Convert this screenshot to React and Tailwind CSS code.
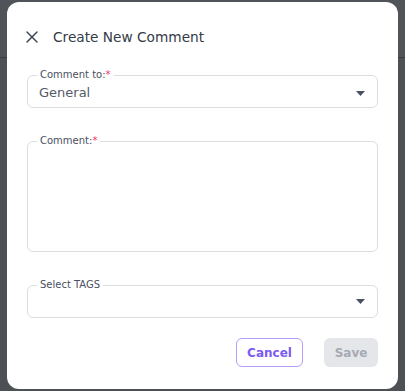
import { X } from "lucide-react";

function Caret() {
  return (
    <svg width="9" height="5" viewBox="0 0 9 5" className="shrink-0">
      <path d="M0 0h9L4.5 5z" fill="#4b5060" />
    </svg>
  );
}

function Field({ label, required, className, children }) {
  return (
    <fieldset
      className={
        "m-0 min-w-0 rounded-[6px] border border-[#dcdde0] p-0 " + (className || "")
      }
    >
      <legend className="ml-[9px] px-[3px] text-[10px] leading-[12px] font-medium text-[#4b5060]">
        {label}
        {required && <span className="text-[#f0336a]">*</span>}
      </legend>
      {children}
    </fieldset>
  );
}

export default function App() {
  return (
    <div
      className="relative h-[391px] w-[405px] overflow-hidden bg-[#4d5055] pt-[2px] pl-[7px]"
      style={{ fontFamily: "'DejaVu Sans', sans-serif" }}
    >
      <div className="absolute inset-x-0 top-0 h-[58px] border-b border-[#3a3c40] bg-[#505358]" />
      <div className="relative flex h-[387px] w-[391px] flex-col rounded-[12px] bg-white px-[20px] pt-[25px]">
        <div className="flex items-center gap-[11px]">
          <X size={20} strokeWidth={1.7} className="-ml-[5px] text-[#3d4451]" />
          <h2 className="text-[13.7px] leading-[20px] font-normal text-[#343b47]">
            Create New Comment
          </h2>
        </div>

        <Field label="Comment to:" required className="mt-[22px] h-[39px]">
          <div className="flex items-center justify-between pt-[2px] pr-[12px] pl-[11px]">
            <span className="text-[13px] leading-[20px] text-[#555a66]">General</span>
            <Caret />
          </div>
        </Field>

        <Field label="Comment:" required className="mt-[27px] h-[117px]">
          <textarea className="block h-[100px] w-full resize-none bg-transparent px-[11px] text-[13px] outline-none" />
        </Field>

        <Field label="Select TAGS" className="mt-[27px] h-[39px]">
          <div className="flex h-[20px] items-center justify-end pr-[12px]">
            <Caret />
          </div>
        </Field>

        <div className="mt-[20px] flex justify-end gap-[21px]">
          <button className="h-[29px] w-[67px] rounded-[6px] border border-[#b49cf7] text-[12px] font-semibold text-[#7b5cf0]">
            Cancel
          </button>
          <button className="h-[29px] w-[54px] rounded-[6px] bg-[#e4e6ea] text-[12px] font-semibold text-[#a6aab3]">
            Save
          </button>
        </div>
      </div>
    </div>
  );
}
